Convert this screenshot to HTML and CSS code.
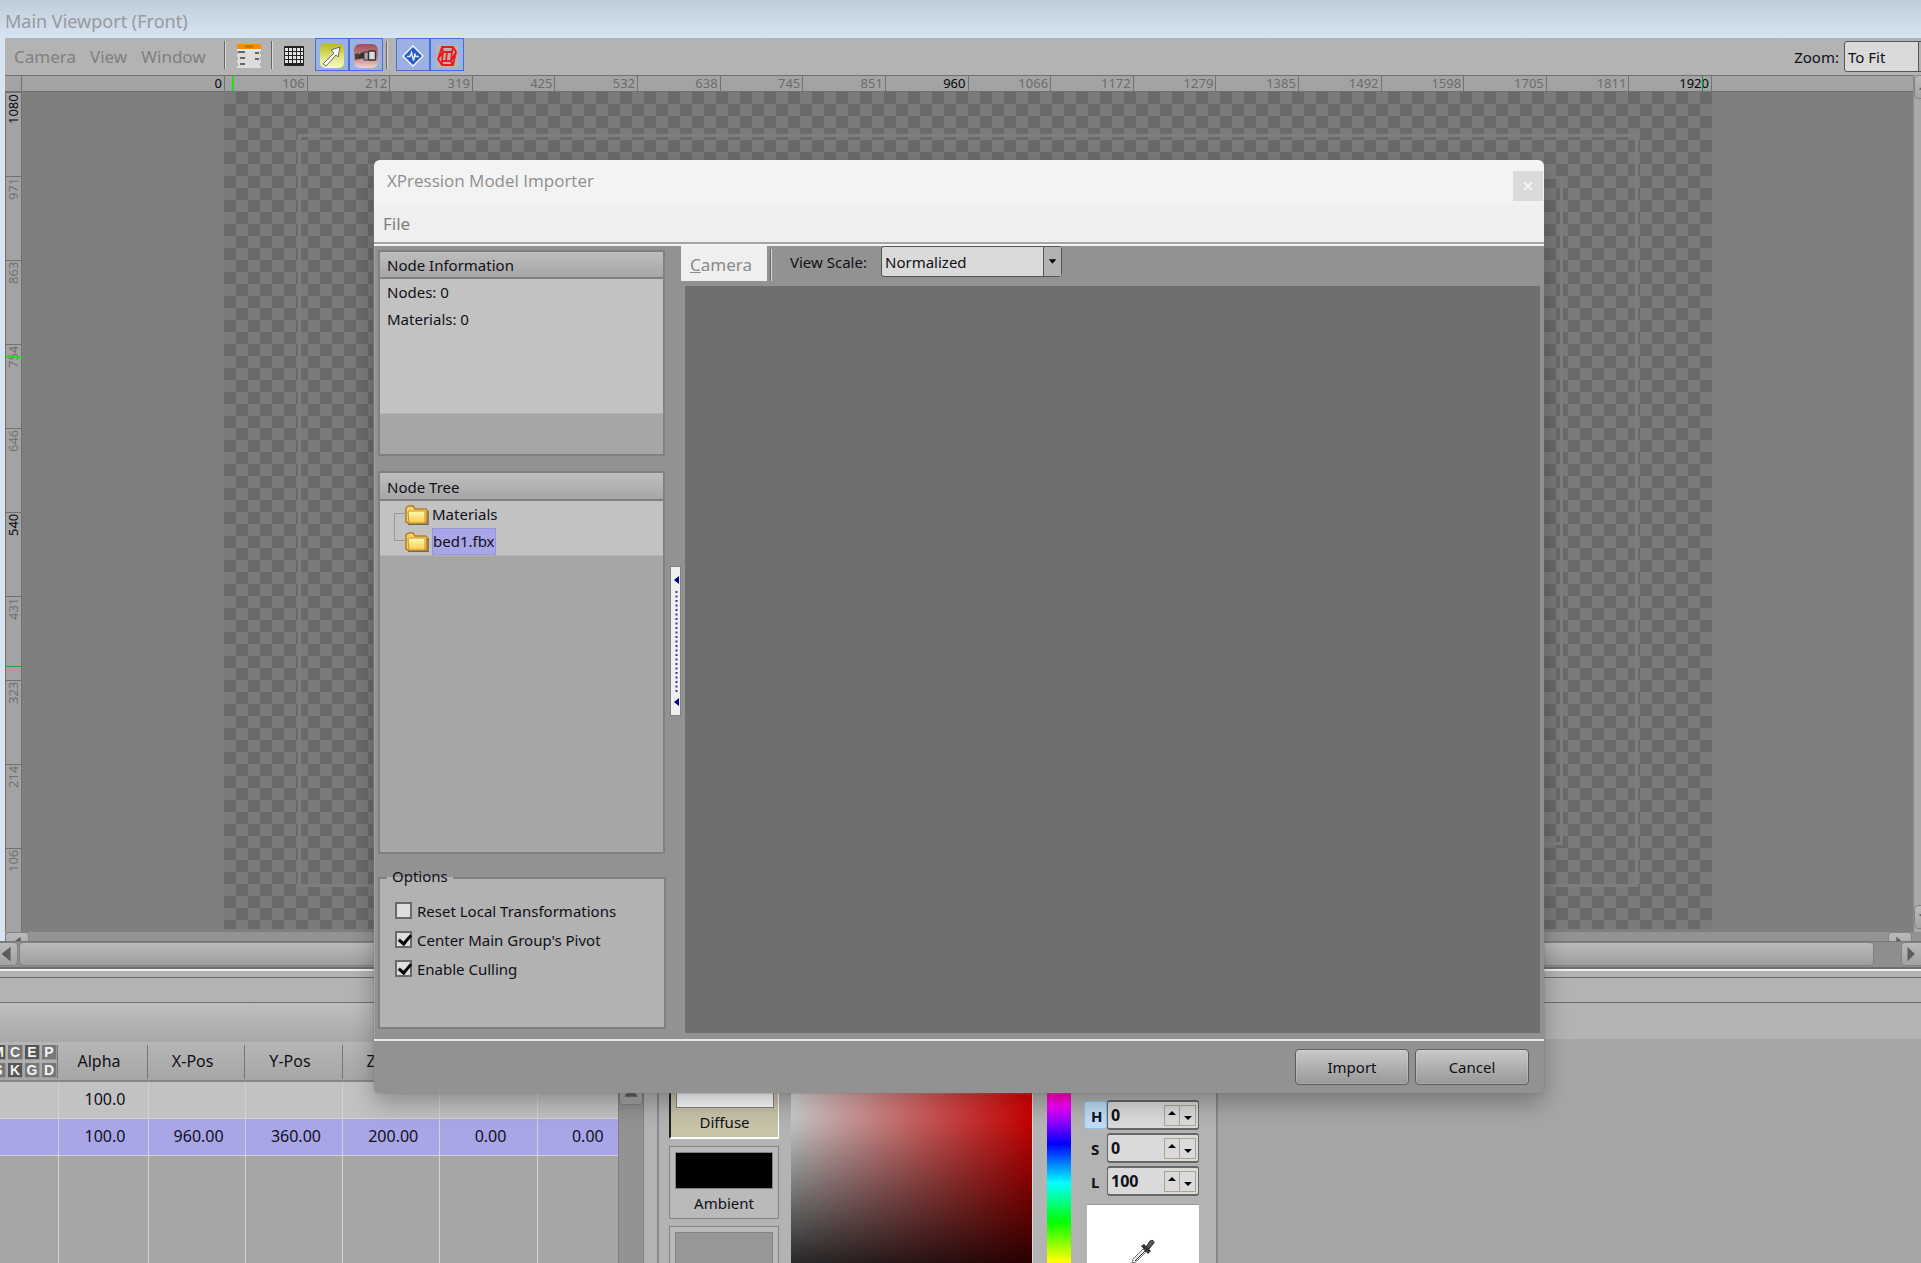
FILE: index.html
```html
<!DOCTYPE html>
<html lang="en">
<head>
<meta charset="utf-8">
<title>XPression</title>
<link rel="stylesheet" href="styles.css">
</head>
<body>
<div class="app">
  <section class="viewport">
    <h1 class="viewport-title">Main Viewport (Front)</h1>
    <div class="viewport-body">
      <div class="toolbar">
        <nav class="menus">
          <button class="menu" type="button">Camera</button>
          <button class="menu" type="button">View</button>
          <button class="menu" type="button">Window</button>
        </nav>
        <span class="sep"></span>
        <button class="tool wide" type="button" aria-label="Properties">
          <svg width="24" height="24" viewBox="0 0 24 24"><rect width="24" height="24" fill="#dcdcdc"/><rect width="24" height="5" fill="#ff8c00"/><path d="M8 2.500h8" stroke="#b96a10" stroke-width="2"/><path d="M0 6h24" stroke="#f5f5f5"/><path d="M1 8h7M3 14h5M3 20h5M18 9h4M18 15h4" stroke="#666" stroke-width="2"/><path d="M.5 7v17M23.500 7v17" stroke="#a9b09a" stroke-dasharray="3 3"/></svg>
        </button>
        <span class="sep"></span>
        <button class="tool grid-tool" type="button" aria-label="Grid">
          <svg width="20" height="20" viewBox="0 0 20 20"><rect width="20" height="20" rx="1" fill="#222"/><path d="M1 3.500h18M1 7.500h18M1 11.500h18M1 15.500h18" stroke="#e4e4e4" stroke-width="3" stroke-dasharray="3 1"/></svg>
        </button>
        <span class="pair">
          <button class="tool on" type="button" aria-label="Select">
            <svg width="24" height="24" viewBox="0 0 24 24"><defs><linearGradient id="gy" x2="0" y2="1"><stop offset="0" stop-color="#b8bc1c"/><stop offset=".6" stop-color="#e3e68c"/><stop offset="1" stop-color="#f6f8c8"/></linearGradient><linearGradient id="gr" x2="0" y2="1"><stop offset="0" stop-color="#a05058"/><stop offset=".6" stop-color="#c98a8e"/><stop offset="1" stop-color="#efd4d4"/></linearGradient></defs><rect width="24" height="24" rx="5" fill="url(#gy)"/><path d="M3 20L14 9l-3-3 9-3-2 10-2-2L6 22z" fill="#fff" stroke="#666" stroke-width="1"/></svg>
          </button>
          <button class="tool on" type="button" aria-label="Camera view">
            <svg width="24" height="24" viewBox="0 0 24 24"><rect width="24" height="24" rx="6" fill="url(#gr)"/><path d="M1 10l4-1v6l-4 1z" fill="#444"/><path d="M5 11l3-3 3 2v4l-6 1z" fill="#333"/><path d="M10 8h5v8h-5z" fill="#b9a0a0" stroke="#333"/><rect x="14.500" y="7" width="7" height="9" rx="1" fill="#ddd" stroke="#333" stroke-width="1.500"/></svg>
          </button>
        </span>
        <span class="sep"></span>
        <span class="pair">
          <button class="tool on" type="button" aria-label="Animation">
            <svg width="24" height="24" viewBox="0 0 24 24"><path d="M12 1l11 11-11 11L1 12z" fill="#f4f6fb"/><path d="M12 3l9 9-9 9-9-9z" fill="#2258c8"/><path d="M6 12.500h3l1.500-4 2 8 1.500-6 1 2h3" fill="none" stroke="#dce8ff" stroke-width="1.500"/></svg>
          </button>
          <button class="tool on" type="button" aria-label="Bounding box">
            <svg width="24" height="24" viewBox="0 0 24 24"><rect x="1" y="1" width="22" height="22" fill="#b5b5b5"/><path d="M7 3h11l3 5-3 13H7l-4-6zM7 3l1 5-5 7M8 8h9l1-5M17 8l-1 9 2 4M8 8l-1 9h9l5-9M7 17v4M12 8l-1 9" fill="none" stroke="#f01818" stroke-width="1.800"/></svg>
          </button>
        </span>
        <div class="zoom">
          <label for="zoom">Zoom:</label>
          <select id="zoom" class="select zoom-select"><option>To Fit</option></select>
        </div>
      </div>
      <div class="stage-area">
        <div class="ruler-corner"></div>
        <div class="ruler-top">
          <span class="strong">0</span><span>106</span><span>212</span><span>319</span><span>425</span><span>532</span><span>638</span><span>745</span><span>851</span><span class="strong">960</span><span>1066</span><span>1172</span><span>1279</span><span>1385</span><span>1492</span><span>1598</span><span>1705</span><span>1811</span><span class="strong">1920</span>
          <i class="mark mark-start"></i><i class="mark mark-end"></i>
        </div>
        <div class="vscroll">
          <svg class="sbtn" viewBox="0 0 24 24"><path d="M4 15h12l-6-6z"/></svg>
          <svg class="sbtn" viewBox="0 0 24 24"><path d="M4 9h12l-6 6z"/></svg>
        </div>
        <div class="ruler-left">
          <span class="strong">1080</span><span>971</span><span>863</span><span>754</span><span>646</span><span class="strong">540</span><span>431</span><span>323</span><span>214</span><span>106</span>
          <i class="mark mark-high"></i><i class="mark mark-low"></i>
        </div>
        <div class="canvas">
          <div class="checker"><div class="safe safe-action"></div><div class="safe safe-title"></div></div>
        </div>
      </div>
      <div class="inner-scroll">
        <svg class="sbtn" viewBox="0 0 24 24"><path d="M16 4v16L6 12z"/></svg>
        <svg class="sbtn" viewBox="0 0 24 24"><path d="M8 4v16l9-8z"/></svg>
      </div>
    </div>
    <div class="outer-scroll">
      <svg class="sbtn first" viewBox="0 0 24 24"><path d="M17 4v16L7 12z"/></svg>
      <div class="thumb"></div>
      <svg class="sbtn last" viewBox="0 0 24 24"><path d="M6 4v16l8-8z"/></svg>
    </div>
  </section>

  <div class="divider"></div>
  <div class="band"></div>

  <div class="bottom">
    <section class="objects">
      <div class="objects-bar"></div>
      <div class="objects-main">
        <div class="table-wrap">
          <table class="objects-table">
            <colgroup><col class="c-flags"><col class="c-alpha"><col><col><col><col><col></colgroup>
            <thead>
              <tr>
                <th><div class="flags"><b class="dk">M</b><b>C</b><b class="dk">E</b><b>P</b><b>S</b><b class="dk">K</b><b>G</b><b>D</b></div></th>
                <th>Alpha</th><th>X-Pos</th><th>Y-Pos</th><th>Z-Pos</th><th></th><th></th>
              </tr>
            </thead>
            <tbody>
              <tr><td></td><td>100.0</td><td></td><td></td><td></td><td></td><td></td></tr>
              <tr class="selected"><td></td><td>100.0</td><td>960.00</td><td>360.00</td><td>200.00</td><td>0.00</td><td>0.00</td></tr>
              <tr class="filler"><td></td><td></td><td></td><td></td><td></td><td></td><td></td></tr>
            </tbody>
          </table>
        </div>
        <div class="list-scroll"><svg class="sbtn" viewBox="0 0 24 24"><path d="M5 16h14l-4-7H9z"/></svg></div>
      </div>
    </section>
    <section class="material">
      <div class="swatches">
        <button class="swatch active" type="button"><span class="chip white"></span>Diffuse</button>
        <button class="swatch" type="button"><span class="chip black"></span>Ambient</button>
        <button class="swatch" type="button" aria-label="Third colour"><span class="chip grey"></span></button>
      </div>
      <div class="field"></div>
      <div class="hue"></div>
      <div class="values">
        <div class="value"><label class="hot" for="h">H</label><span class="spin"><input id="h" value="0"><button type="button" aria-label="Raise H"><svg width="8" height="12" viewBox="0 0 8 12"><path d="M0 6l4-4 4 4z"/></svg></button><button type="button" aria-label="Lower H"><svg width="8" height="12" viewBox="0 0 8 12"><path d="M0 7l4 4 4-4z"/></svg></button></span></div>
        <div class="value"><label for="s">S</label><span class="spin"><input id="s" value="0"><button type="button" aria-label="Raise S"><svg width="8" height="12" viewBox="0 0 8 12"><path d="M0 6l4-4 4 4z"/></svg></button><button type="button" aria-label="Lower S"><svg width="8" height="12" viewBox="0 0 8 12"><path d="M0 7l4 4 4-4z"/></svg></button></span></div>
        <div class="value"><label for="l">L</label><span class="spin"><input id="l" value="100"><button type="button" aria-label="Raise L"><svg width="8" height="12" viewBox="0 0 8 12"><path d="M0 6l4-4 4 4z"/></svg></button><button type="button" aria-label="Lower L"><svg width="8" height="12" viewBox="0 0 8 12"><path d="M0 7l4 4 4-4z"/></svg></button></span></div>
        <button class="picker" type="button" aria-label="Pick colour">
          <svg width="26" height="26" viewBox="0 0 26 26"><path d="M2 24l1-4L13 10l3 3L6 23z" fill="#eee" stroke="#777"/><path d="M5 22L15 12" stroke="#333"/><path d="M11 7l3-2 7 7-3 3z" fill="#333"/><path d="M16 8l4-6q4-2 4 2l-5 6z" fill="#555" stroke="#333"/></svg>
        </button>
      </div>
    </section>
    <div class="rest"></div>
  </div>

  <div class="dialog" role="dialog" aria-labelledby="dialog-title">
    <header class="dialog-head">
      <h2 id="dialog-title">XPression Model Importer</h2>
      <button class="close" type="button" aria-label="Close"><svg width="10" height="8" viewBox="0 0 10 8"><path d="M1 0l8 8M9 0L1 8" stroke="#f4f4f4" stroke-width="2"/></svg></button>
    </header>
    <nav class="dialog-menu"><button class="menu" type="button">File</button></nav>
    <div class="dialog-body">
      <div class="side">
        <section class="panel info">
          <h3>Node Information</h3>
          <div class="panel-rows info-rows"><p>Nodes: 0</p><p>Materials: 0</p></div>
        </section>
        <section class="panel tree">
          <h3>Node Tree</h3>
          <ul class="panel-rows">
            <li><span class="branch top"></span><svg class="folder" viewBox="0 0 24 20"><use href="#folder"/></svg><span class="node">Materials</span></li>
            <li><span class="branch end"></span><svg class="folder" viewBox="0 0 24 20"><use href="#folder"/></svg><span class="node picked">bed1.fbx</span></li>
          </ul>
        </section>
        <fieldset class="options">
          <legend>Options</legend>
          <label><input type="checkbox">Reset Local Transformations</label>
          <label><input type="checkbox" checked>Center Main Group's Pivot</label>
          <label><input type="checkbox" checked>Enable Culling</label>
        </fieldset>
      </div>
      <div class="splitter">
        <svg width="9" height="148" viewBox="0 0 9 148"><path d="M8 9v8l-5-4zM8 131v8l-5-4z" fill="#00008b"/><path d="M5.500 24v103" stroke="#3a3aae" stroke-width="2" stroke-dasharray="2 2.500"/></svg>
      </div>
      <div class="preview">
        <div class="preview-bar">
          <button class="camera" type="button"><u>C</u>amera</button>
          <span class="sep"></span>
          <label for="scale">View Scale:</label>
          <span class="combo"><select id="scale" class="select"><option>Normalized</option></select><svg width="18" height="29" viewBox="0 0 18 29"><path d="M5 12h8l-4 5z"/></svg></span>
        </div>
        <div class="preview-view"></div>
      </div>
    </div>
    <footer class="dialog-foot">
      <button class="btn" type="button">Import</button>
      <button class="btn" type="button">Cancel</button>
    </footer>
  </div>
</div>
<svg class="defs" width="0" height="0" aria-hidden="true">
  <defs>
    <linearGradient id="fold" x2="0" y2="1"><stop offset="0" stop-color="#fffdb0"/><stop offset="1" stop-color="#fcc84c"/></linearGradient>
    <g id="folder"><path d="M3 19.500h20V6" fill="none" stroke="#666" stroke-width="1.500"/><path d="M1 17V3q0-1 1-1l2-1h4l2 3h10q2 0 2 2v12H3z" fill="#f7d36c" stroke="#b87f1c" stroke-width="1.500"/><path d="M3 7q0-1 1-1h15q1 0 1 1v11H4z" fill="url(#fold)" stroke="#c8912a"/></g>
  </defs>
</svg>
</body>
</html>
```
FILE: styles.css
```css
* { box-sizing: border-box; }
body {
  margin: 0;
  font: 15px/20px "Noto Sans", "Open Sans", sans-serif;
  color: #101018;
  background: #a6a6a6;
}
h1, h2, h3, p, ul { margin: 0; padding: 0; font-weight: 400; font-size: 15px; }
ul { list-style: none; }
button, input, select { font: inherit; color: inherit; margin: 0; padding: 0; border: 0; background: none; }
svg { display: block; }
.defs { position: absolute; }
.app { position: relative; height: 100vh; overflow: hidden; display: flex; flex-direction: column; }

/* main viewport */
.viewport { flex: none; background: linear-gradient(#bfccd9, #d7e5f3 38px); }
.viewport-title { height: 38px; padding: 11px 5px 0; color: #97999c; font-size: 18px; }
.viewport-body { margin-left: 5px; background: #b3b3b3; }
.toolbar { display: flex; height: 37px; align-items: flex-start; overflow: hidden; background: #b3b3b3; }
.menus { display: flex; gap: 14px; padding: 9px 0 0 9px; width: 219px; }
.menu { color: #808080; font-size: 17px; }
.sep { flex: none; width: 2px; height: 28px; margin-top: 3px; background: linear-gradient(to right, #666 50%, #d8d8d8 50%); }
.tool { display: flex; align-items: center; justify-content: center; width: 34px; height: 33px; padding-top: 2px; }
.tool.wide { width: 45px; }
.grid-tool { width: 42px; }
.tool.on { background: #9db0e2; border: 1px solid #4571d4; }
.pair { display: flex; }
.pair + .sep { margin-left: 3px; margin-right: 8px; }
.zoom { display: flex; flex: none; gap: 5px; margin-left: auto; margin-right: -23px; align-items: center; padding-top: 3px; }
.select { appearance: none; height: 31px; padding: 0 3px; border: 1px solid #555; border-radius: 3px; background: #dadada; outline: 0; }
.zoom-select { width: 100px; background: linear-gradient(to right, #dadada 73px, #555 73px 74px, #b2b2b2 74px); }

.stage-area { display: grid; grid-template-columns: 17px 1fr 8px; grid-template-rows: 17px auto; background: #a3a3a3; }
.ruler-corner, .ruler-top { border: solid #717171; border-width: 1px 0; }
.ruler-corner { border-right-width: 1px; }
.ruler-top { position: relative; display: grid; grid-template-columns: 203px repeat(18, 1fr) 201px; font-size: 13px; line-height: 15px; color: #6c6c6c; text-align: right; }
.ruler-top span { padding-right: 2px; border-right: 1px solid #717171; }
.ruler-top .strong, .ruler-left .strong { color: #06060c; }
.mark { position: absolute; background: #1fe01f; }
.mark-start { left: 210px; top: 0; width: 2px; height: 15px; }
.mark-end { right: 210px; top: 0; width: 1px; height: 15px; background: #0c9c1c; }
.mark-high { top: 264px; left: 0; width: 16px; height: 2px; }
.mark-low { top: 574px; left: 0; width: 16px; height: 1px; background: #20a828; }
.vscroll { grid-column: 3; grid-row: 1 / 3; display: flex; flex-direction: column; justify-content: space-between; background: #a8a8a8; border-left: 1px solid #8a8a8a; overflow: hidden; padding-bottom: 3px; }
.ruler-left { position: relative; display: grid; grid-template-rows: repeat(10, 84px); font-size: 13px; line-height: 15px; color: #717171; border-left: 1px solid #717171; border-right: 1px solid #717171; }
.ruler-left span { writing-mode: vertical-rl; transform: rotate(180deg); border-bottom: 1px solid #717171; text-align: right; padding-bottom: 1px; }
.canvas { background: #7f7f7f; padding: 0 201px 3px 202px; }
.checker {
  position: relative;
  height: 100%;
  background: conic-gradient(#6a6a6a 25%, #7b7b7b 0 50%, #6a6a6a 0 75%, #7b7b7b 0) 0 0 / 24px 24px;
}
.safe { position: absolute; border: 3px solid #7e7e7e; }
.safe-action { inset: 5%; }
.safe-title { inset: 10%; }
.inner-scroll { display: flex; justify-content: space-between; height: 9px; padding-right: 9px; background: #939393; overflow: hidden; }
.sbtn { flex: none; width: 24px; height: 24px; border: 1px solid #828282; border-radius: 4px; background: linear-gradient(#bababa, #a2a2a2); fill: #5c5c5c; }
.outer-scroll { display: flex; gap: 1px; height: 26px; padding: 0 0 1px; background: #8e8e8e; border-top: 1px solid #777; overflow: hidden; }
.outer-scroll .first { margin-left: -6px; }
.outer-scroll .last { margin-left: 26px; margin-right: -4px; }
.thumb { flex: 1; border: 1px solid #828282; border-radius: 4px; background: linear-gradient(#bababa, #9e9e9e); }
.divider { flex: none; height: 11px; border: solid #6e6e6e; border-width: 2px 0 1px; background: linear-gradient(#f0f0f0 2px, #b3b3b3 2px); }
.band { flex: none; height: 25px; background: #b3b3b3; border-bottom: 1px solid #6e6e6e; }

/* lower area */
.bottom { flex: 1; min-height: 0; display: flex; overflow: hidden; background: #b3b3b3; }
.objects { flex: none; width: 659px; border-right: 2px solid #8a8a8a; }
.objects-bar { height: 39px; background: linear-gradient(#bfbfbf, #a8a8a8); }
.objects-main { display: flex; height: 100%; }
.table-wrap { width: 618px; overflow: hidden; background: #a6a6a6; }
.objects-table { width: 635px; table-layout: fixed; border-collapse: collapse; font-size: 16px; }
.c-flags { width: 58px; }
.c-alpha { width: 90px; }
.objects-table th { height: 39px; padding: 0 8px 0 0; font-weight: 400; background: linear-gradient(to right, transparent calc(100% - 1px), #777 0) 0 3px / 100% 34px no-repeat, linear-gradient(#b6b6b6, #a6a6a6); border-bottom: 2px solid #868686; }
.objects-table td { height: 37px; padding: 0 0 1px 4px; text-align: center; background: #c2c2c2; border: 1px solid #d2d2d2; border-width: 0 1px 1px 0; }
.objects-table .selected td { background: #a8a6e6; }
.objects-table .filler td { height: 400px; background: #a6a6a6; }
.objects-table th:first-child { padding: 0; }
.flags { display: grid; grid-template-columns: repeat(4, 15px); gap: 3px 2px; margin-left: -9px; width: 66px; }
.flags b { height: 15px; font: bold 14px/15px "Liberation Sans", sans-serif; color: #f2f2f2; background: #777; border: solid #999; border-width: 0 1px 1px 0; }
.flags .dk { background: #555; }
.list-scroll { width: 26px; background: #929292; border: solid #828282; border-width: 0 1px; padding-top: 39px; }
.material { flex: none; display: flex; width: 559px; padding: 63px 17px 0 10px; border-right: 2px solid #868686; }
.swatches { display: flex; flex-direction: column; gap: 7px; width: 110px; flex: none; }
.swatch { flex: none; display: flex; flex-direction: column; align-items: center; gap: 4px; height: 73px; padding: 5px; background: #bababa; border: 1px solid #858585; }
.swatch.active { background: #c8c2a8; border-color: #222 #fff #fff #222; border-width: 1px 1px 2px 2px; }
.chip { width: 98px; height: 39px; border: 1px solid #858585; }
.white { background: #fff; }
.black { background: #000; }
.grey { background: #979797; }
.field { flex: none; width: 242px; height: 234px; margin-left: 12px; background: linear-gradient(transparent, #000), linear-gradient(to right, #fff, #f00); border-right: 1px solid #ddd; }
.hue { flex: none; width: 24px; height: 234px; margin-left: 14px; background: linear-gradient(#f00, #f0f, #00f, #0ff, #0f0, #ff0, #f00); }
.values { display: flex; flex-direction: column; gap: 3px; margin-left: 13px; padding-top: 34px; width: 115px; flex: none; font-weight: 700; font-size: 16px; }
.value { flex: none; display: flex; align-items: center; }
.value label { width: 23px; height: 28px; border: 1px solid transparent; border-radius: 3px; padding: 4px 0 0 6px; line-height: 20px; font-size: 15px; }
.value .hot { background: #bfdcf5; border-color: #8fc4f0; }
.spin { display: flex; align-items: center; width: 92px; height: 30px; border: 2px solid #666; border-width: 2px 1px 2px 1px; border-radius: 3px; padding-right: 2px; background: #dadada; }
.spin input { width: 56px; flex: 1; min-width: 0; padding-left: 3px; outline: 0; }
.spin button { width: 16px; height: 21px; display: flex; justify-content: center; align-items: center; border: 1px solid #aca490; }
.spin button + button { border-left: 0; }
.picker { flex: none; display: flex; justify-content: center; align-items: center; width: 112px; height: 94px; margin: 5px 0 0 3px; background: #fff; border-top: 1px solid #999; }
.rest { flex: 1; background: linear-gradient(#b3b3b3 36px, #a6a6a6 36px); }

/* importer window */
.dialog { position: absolute; top: 160px; left: 374px; right: 377px; display: flex; flex-direction: column; background: #929292; border-radius: 6px; box-shadow: 0 0 2px #777, 0 10px 24px rgba(0, 0, 0, .28); overflow: hidden; }
.dialog-head { display: flex; justify-content: space-between; height: 45px; padding: 11px 1px 0 13px; background: #f3f3f3; color: #8e8e8e; }
.dialog-head h2 { font: 17px/20px "Open Sans", "Noto Sans", sans-serif; }
.close { display: flex; align-items: center; justify-content: center; width: 30px; height: 30px; background: #dadada; }
.dialog-menu { height: 41px; padding: 9px 9px 0; background: linear-gradient(#efefef 37px, #a5a5a5 37px 39px, #f4f4f4 39px); }
.dialog-body { display: flex; border-left: 1px solid #a2a2a2; }
.side { flex: none; width: 291px; padding: 4px 0 10px 3px; }
.panel { width: 287px; border: 2px solid #808080; background: #a6a6a6; }
.panel h3 { height: 27px; padding: 3px 7px; background: linear-gradient(#bebebe, #a6a6a6); border-bottom: 2px solid #808080; }
.panel-rows { background: #c2c2c2; border-bottom: 1px solid #b4b4b4; }
.panel-rows p { height: 27px; padding: 3px 7px; }
.info { height: 206px; }
.info-rows { height: 135px; }
.tree { height: 383px; margin-top: 15px; }
.tree h3 { height: 28px; padding-top: 4px; }
.tree li { display: flex; align-items: center; height: 27px; padding-left: 14px; }
.branch { width: 11px; height: 27px; background: linear-gradient(#999, #999) 0 12px / 11px 1px no-repeat, linear-gradient(#999, #999) 0 100% / 1px 15px no-repeat; }
.branch.end { background-position: 0 12px, 0 0; background-size: 11px 1px, 1px 13px; }
.folder { width: 24px; height: 20px; margin-right: 3px; }
.node { height: 27px; padding: 3px 0; }
.picked { background: #a8a6e6; border: 1px solid #9694e0; padding: 2px 0; }
.options { position: relative; width: 288px; height: 152px; margin: 23px 0 0; padding: 17px 15px 0; background: #b2b2b2; border: 2px solid #808080; }
.options legend { position: absolute; top: -13px; left: 7px; padding: 0 5px; background: linear-gradient(#929292 11px, #b2b2b2 11px); }
.options label { display: flex; align-items: center; gap: 5px; height: 29px; }
.options input { appearance: none; width: 17px; height: 17px; border: 2px solid #6a6a6a; background: #dedede; }
.options input:checked::after { content: ""; display: block; width: 5px; height: 10px; margin: -1px 0 0 4px; border: solid #000; border-width: 0 3px 3px 0; transform: rotate(40deg); }
.splitter { flex: none; align-self: flex-start; width: 11px; margin: 320px 5px 0 4px; background: #efefef; border: 1px solid #808080; }
.preview { flex: 1; display: flex; flex-direction: column; margin: 0 4px 6px -4px; }
.preview-bar { display: flex; align-items: flex-start; height: 40px; margin-left: -1px; }
.camera { width: 86px; height: 35px; padding: 3px 6px 0 0; background: #efefef; color: #8a8a8a; font-size: 17px; }
.preview-bar .sep { margin: 3px 18px 0 3px; height: 32px; }
.preview-bar label { width: 91px; padding-top: 6px; }
.combo { position: relative; }
.combo .select { width: 181px; height: 31px; }
.combo svg { position: absolute; top: 1px; right: 1px; background: #b2b2b2; border-left: 1px solid #555; pointer-events: none; }
.preview-view { flex: 1; margin-left: 3px; background: #6f6f6f; }
.dialog-foot { display: flex; justify-content: flex-end; gap: 6px; height: 54px; padding: 8px 15px 0; border-top: 2px solid #e8e8e8; }
.btn { width: 114px; height: 36px; background: linear-gradient(#c8c8c8, #989898); border: 1px solid #5e5e5e; border-radius: 4px; box-shadow: inset 0 0 0 1px rgba(255, 255, 255, .15); }
```
